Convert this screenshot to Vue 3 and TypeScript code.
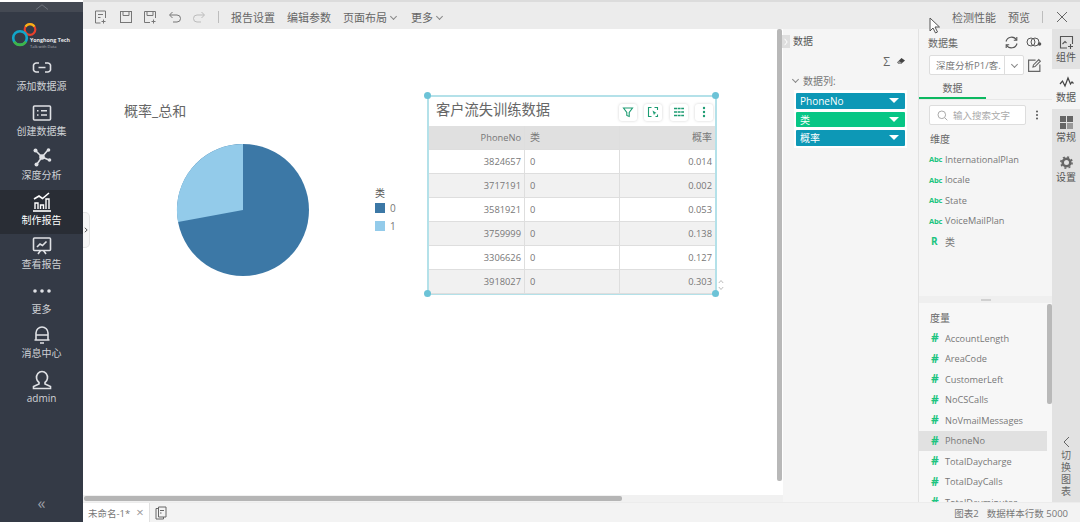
<template>
  <div class="app">
    <!-- Barra lateral -->
    <aside class="sidebar">
      <div class="side-top">
        <svg width="14" height="6" viewBox="0 0 14 6"><path d="M1 5.500 7 .8l6 4.700" fill="none" stroke="#6d727c" stroke-width="1" /></svg>
      </div>
      <div class="logo">
        <svg width="30" height="28" viewBox="0 0 30 28">
          <circle cx="21" cy="8.500" r="5.300" fill="none" stroke="#e8402c" stroke-width="2.200" />
          <path d="M16.500 5.700A5.300 5.300 0 0 1 25.500 5.700" fill="none" stroke="#f6b417" stroke-width="2.200" />
          <circle cx="11" cy="17" r="6.800" fill="none" stroke="#12a5c9" stroke-width="2.600" />
          <path d="M5.200 20.600A6.800 6.800 0 0 0 16.800 20.600" fill="none" stroke="#3fb549" stroke-width="2.600" />
        </svg>
        <div class="logo-text">
          <b>Yonghong Tech</b>
          <span>Talk with Data</span>
        </div>
      </div>
      <div v-for="item in navItems" :key="item.label" class="nav-item" :class="{ active: item.active }">
        <svg class="nav-icon" width="22" height="22" viewBox="0 0 22 22" v-html="item.icon"></svg>
        <span>{{ item.label }}</span>
      </div>
      <div class="side-bottom">«</div>
    </aside>

    <div class="main">
      <!-- Barra de herramientas -->
      <header class="toolbar">
        <div class="tool-icons">
          <svg v-for="(icon, i) in toolIcons" :key="i" width="16" height="16" viewBox="0 0 16 16" v-html="icon"></svg>
        </div>
        <i class="tool-sep"></i>
        <span class="tool-text">报告设置</span>
        <span class="tool-text">编辑参数</span>
        <span class="tool-text">页面布局<em class="caret"></em></span>
        <span class="tool-text">更多<em class="caret"></em></span>
        <div class="tool-right">
          <span>检测性能</span>
          <span>预览</span>
          <i class="tool-sep"></i>
          <svg width="12" height="12" viewBox="0 0 12 12"><path d="M1 1l10 10M11 1 1 11" stroke="#666" stroke-width="1" /></svg>
        </div>
        <svg class="cursor" width="12" height="17" viewBox="0 0 12 17"><path d="M1 1v13l3-3 2.500 5 2-1-2.500-5h4.500z" fill="#fff" stroke="#555" stroke-width="1" /></svg>
      </header>

      <div class="workspace">
        <!-- Lienzo -->
        <div class="canvas-col">
          <div class="canvas-row">
            <section class="canvas">
              <div class="toggle-tab">
                <svg width="4" height="6" viewBox="0 0 4 6"><path d="M.8.8 3.200 3 .8 5.200" fill="none" stroke="#555" stroke-width="1" /></svg>
              </div>

              <div class="pie-title">概率_总和</div>
              <svg class="pie" width="134" height="134" viewBox="-67 -67 134 134">
                <circle r="66" fill="#3c78a6" />
                <path d="M0 0 -65 12A66 66 0 0 1 0 -66z" fill="#93cbea" />
              </svg>
              <div class="legend">
                <div class="legend-title">类</div>
                <div class="legend-row"><i style="background: #3c78a6"></i>0</div>
                <div class="legend-row"><i style="background: #93cbea"></i>1</div>
              </div>

              <div class="widget">
                <i class="handle top-left"></i><i class="handle top-right"></i><i class="handle bottom-left"></i><i class="handle bottom-right"></i>
                <div class="widget-head">
                  <span class="widget-title">客户流失训练数据</span>
                  <div class="widget-tools">
                    <button v-for="(icon, i) in widgetIcons" :key="i" type="button">
                      <svg width="12" height="12" viewBox="0 0 12 12" v-html="icon"></svg>
                    </button>
                  </div>
                </div>
                <div class="table">
                  <div class="tr head">
                    <div class="td num">PhoneNo</div>
                    <div class="td cjk">类</div>
                    <div class="td num cjk">概率</div>
                  </div>
                  <div v-for="row in rows" :key="row[0]" class="tr">
                    <div class="td num">{{ row[0] }}</div>
                    <div class="td">0</div>
                    <div class="td num">{{ row[1] }}</div>
                  </div>
                </div>
                <svg class="spinner" width="6" height="12" viewBox="0 0 6 12"><path d="M.8 4 3 1.500 5.200 4M.8 8 3 10.500 5.200 8" fill="none" stroke="#aaa" stroke-width=".8" /></svg>
              </div>
            </section>
            <div class="v-scroll"></div>
          </div>
          <div class="h-scroll"><div class="h-thumb"></div></div>
        </div>

        <!-- Panel de datos -->
        <section class="data-panel">
          <i class="panel-tab">
            <svg width="4" height="8" viewBox="0 0 4 8"><path d="M.6.8 3.200 4 .6 7.200" fill="none" stroke="#fff" stroke-width="1" /></svg>
          </i>
          <div class="panel-title">数据</div>
          <div class="panel-tools">
            <span class="sigma">Σ</span>
            <svg width="10" height="10" viewBox="0 0 10 10"><path d="M1 6.500 5.500 2 9 4.500 5 8H3z" fill="#444" /><path d="M1 6.500 3 8h2L6 7 3 5z" fill="#999" /></svg>
          </div>
          <div class="columns-label"><em class="caret"></em>数据列:</div>
          <div class="pills">
            <div v-for="pill in pills" :key="pill.label" class="pill" :class="pill.kind">
              <span>{{ pill.label }}</span><i></i>
            </div>
          </div>
        </section>

        <!-- Conjunto de datos -->
        <section class="set-panel">
          <div class="set-top">
            <div class="set-head">
              <span>数据集</span>
              <svg width="15" height="15" viewBox="0 0 15 15"><path d="M2 6.500A5.700 5.700 0 0 1 12.500 5M13 8.500A5.700 5.700 0 0 1 2.500 10" fill="none" stroke="#555" stroke-width="1.100" /><path d="M12.800 2v3.300H9.800M2.200 13v-3.300h3" fill="none" stroke="#555" stroke-width="1.100" /></svg>
              <svg width="16" height="12" viewBox="0 0 16 12"><circle cx="5" cy="6" r="4" fill="none" stroke="#555" /><circle cx="9" cy="6" r="4" fill="none" stroke="#555" /><circle cx="13.500" cy="8" r="1.800" fill="#555" /></svg>
            </div>
            <div class="set-select-row">
              <div class="set-select">
                <span>深度分析P1/客.</span>
                <b><em class="caret"></em></b>
              </div>
              <svg width="15" height="15" viewBox="0 0 14 14"><path d="M8 2H1.500v10.500H12V6" fill="none" stroke="#666" stroke-width="1.100" /><path d="M5.500 8.500 6 6.500 11 1.500l1.500 1.500-5 5z" fill="none" stroke="#666" /></svg>
            </div>
            <div class="tabs"><span class="tab">数据</span></div>
            <div class="search-row">
              <div class="search">
                <svg width="11" height="11" viewBox="0 0 11 11"><circle cx="4.800" cy="4.800" r="3.800" fill="none" stroke="#aaa" /><path d="M7.600 7.600 10.300 10.300" stroke="#aaa" /></svg>
                <span>输入搜索文字</span>
              </div>
              <i class="dots"></i>
            </div>
            <div class="group-name">维度</div>
            <div v-for="d in dimensions" :key="d" class="field">
              <b class="abc">Abc</b><span>{{ d }}</span>
            </div>
            <div class="field">
              <b class="letter-r">R</b><span class="cjk">类</span>
            </div>
          </div>
          <div class="splitter"><i></i></div>
          <div class="set-bottom">
            <div class="measure-scroll"></div>
            <div class="group-name">度量</div>
            <div v-for="m in measures" :key="m" class="field measure" :class="{ picked: m === 'PhoneNo' }">
              <b class="hash">#</b><span>{{ m }}</span>
            </div>
          </div>
        </section>

        <!-- Riel derecho -->
        <nav class="rail">
          <div v-for="r in railItems" :key="r.label" class="rail-item" :class="{ current: r.current }">
            <svg width="15" height="15" viewBox="0 0 15 15" v-html="r.icon"></svg>
            <span>{{ r.label }}</span>
          </div>
          <div class="rail-switch">
            <svg width="7" height="12" viewBox="0 0 7 12"><path d="M6 1 1 6l5 5" fill="none" stroke="#666" stroke-width="1" /></svg>
            <span>切</span><span>换</span><span>图</span><span>表</span>
          </div>
        </nav>
      </div>

      <!-- Barra de estado -->
      <footer class="status">
        <div class="doc-tab">未命名-1*<span class="doc-x">×</span></div>
        <svg class="doc-icon" width="12" height="14" viewBox="0 0 12 14"><path d="M3.500 2.500H1v10.500h7.500V11M3.500 1H11v10H3.500z" fill="none" stroke="#666" /><path d="M5 7h1.500M5 4.500h4" stroke="#666" /></svg>
        <div class="status-right">
          <span>图表2</span>
          <span>数据样本行数 5000</span>
        </div>
      </footer>
    </div>
  </div>
</template>

<script setup lang="ts">
interface NavItem {
  label: string
  icon: string
  active?: boolean
}

const line = 'fill="none" stroke="#dfe1e5" stroke-width="1.600"'

const navItems: NavItem[] = [
  {
    label: '添加数据源',
    icon: `<path d="M8 6H5a3 3 0 0 0-2.500 2v5a3 3 0 0 0 2.500 2h3M14 6h3a3 3 0 0 1 2.500 2v5a3 3 0 0 1-2.500 2h-3M7.500 10.500h7" ${line}/>`,
  },
  {
    label: '创建数据集',
    icon: `<rect x="2.500" y="4" width="17" height="14" rx="1" ${line}/><path d="M6 8.800h1.500M6 13h1.500M10 8.800h6M10 13h6" ${line}/>`,
  },
  {
    label: '深度分析',
    icon: `<path d="M5 5l6 6M17 4l-6 7M11 11l7 3M11 11l-5 7" ${line}/><circle cx="11" cy="11" r="2.800" fill="#dfe1e5"/><circle cx="4.500" cy="4.500" r="2" fill="#dfe1e5"/><circle cx="17.500" cy="4" r="1.800" fill="#dfe1e5"/><circle cx="18.500" cy="14" r="1.800" fill="#dfe1e5"/><circle cx="5.500" cy="18.500" r="2" fill="#dfe1e5"/>`,
  },
  {
    label: '制作报告',
    active: true,
    icon: `<path d="M3 8l5-3 3.500 2.500L18 2" fill="none" stroke="#fff" stroke-width="1.600"/><path d="M2 20h18" stroke="#fff" stroke-width="1.600"/><path d="M4 18v-6h3v6M9.500 18v-4h3v4M15 18V8h3v10" fill="none" stroke="#fff" stroke-width="1.400"/>`,
  },
  {
    label: '查看报告',
    icon: `<rect x="2.500" y="3" width="17" height="12.500" rx="1" ${line}/><path d="M6 12l3-3 2.500 1.500L15.500 6.500M7 19l2.500-3.500M15 19l-2.500-3.500" ${line}/>`,
  },
  {
    label: '更多',
    icon: '<circle cx="4" cy="11" r="1.800" fill="#dfe1e5"/><circle cx="11" cy="11" r="1.800" fill="#dfe1e5"/><circle cx="18" cy="11" r="1.800" fill="#dfe1e5"/>',
  },
  {
    label: '消息中心',
    icon: `<path d="M5 16V9a6 6 0 0 1 12 0v7zM5 11h12M3.500 16h15M9 19h4" ${line}/>`,
  },
  {
    label: 'admin',
    icon: `<path d="M8 13.500a5.500 6 0 1 1 6 0v1.500l5.500 2.500v2h-17v-2L8 15z" ${line}/>`,
  },
]

const stroke = 'fill="none" stroke="#777" stroke-width="1"'

const toolIcons: string[] = [
  `<path d="M7.500 14H2.500V2h10v7M5 5.500h5M5 8.500h2.500M10.500 10.500v4M8.500 12.500h4" ${stroke}/>`,
  `<rect x="2.500" y="2.500" width="11" height="11" ${stroke}/><path d="M5 2.500v4h6v-4" ${stroke}/>`,
  `<path d="M8 13.500H2.500v-11h11V9M5 2.500v4h6v-4M11.500 10.500v4M9.500 12.500h4" ${stroke}/>`,
  `<path d="M3 6h7a3.500 3.500 0 0 1 0 7H6M5.500 3 2.500 6l3 3" ${stroke}/>`,
  '<path d="M13 6H6a3.500 3.500 0 0 0 0 7h4M10.500 3l3 3-3 3" fill="none" stroke="#bbb" stroke-width="1"/>',
]

const green = 'fill="none" stroke="#1c9c72" stroke-width="1.100"'

const widgetIcons: string[] = [
  `<path d="M1.500 2h9L7.200 6.500V10.500l-2.400-1V6.500z" ${green}/>`,
  `<path d="M4.500 1.500h-3v9h3M7.500 1.500h3v2.500M10.500 8.500v2h-2" ${green}/><path d="M5.500 4.500l4 2.500-1.700.5-.8 1.800z" fill="#1c9c72"/>`,
  `<path d="M1 2.500h10M1 6h10M1 9.500h10" stroke="#1c9c72" stroke-width="1.600" stroke-dasharray="3 .6"/>`,
  '<circle cx="6" cy="2" r="1.200" fill="#1c9c72"/><circle cx="6" cy="6" r="1.200" fill="#1c9c72"/><circle cx="6" cy="10" r="1.200" fill="#1c9c72"/>',
]

const rows: [string, string][] = [
  ['3824657', '0.014'],
  ['3717191', '0.002'],
  ['3581921', '0.053'],
  ['3759999', '0.138'],
  ['3306626', '0.127'],
  ['3918027', '0.303'],
]

const pills = [
  { label: 'PhoneNo', kind: 'blue' },
  { label: '类', kind: 'green' },
  { label: '概率', kind: 'blue' },
]

const dimensions = ['InternationalPlan', 'locale', 'State', 'VoiceMailPlan']

const measures = [
  'AccountLength',
  'AreaCode',
  'CustomerLeft',
  'NoCSCalls',
  'NoVmailMessages',
  'PhoneNo',
  'TotalDaycharge',
  'TotalDayCalls',
  'TotalDayminutes',
]

const railItems = [
  {
    label: '组件',
    icon: '<path d="M8 13H1.500V1.500h12V9" fill="none" stroke="#555" stroke-width="1.100"/><path d="M3.500 9 6 6.500 7.500 8M11.500 9v5M9 11.500h5" fill="none" stroke="#555" stroke-width="1.100"/>',
  },
  {
    label: '数据',
    current: true,
    icon: '<path d="M1 9l2.500-3L6 11l3-8 2.500 6 1.500-2 1.500 1.500" fill="none" stroke="#444" stroke-width="1.200"/>',
  },
  {
    label: '常规',
    icon: '<rect x="1" y="1" width="6" height="6" fill="#666"/><rect x="8" y="1" width="6" height="6" fill="#666"/><rect x="1" y="8" width="6" height="6" fill="#666"/><rect x="8" y="8" width="6" height="6" fill="#999"/>',
  },
  {
    label: '设置',
    icon: '<circle cx="7.500" cy="7.500" r="3.800" fill="none" stroke="#666" stroke-width="2.600"/><circle cx="7.500" cy="7.500" r="5.600" fill="none" stroke="#666" stroke-width="1.600" stroke-dasharray="2 2.400"/>',
  },
]
</script>

<style scoped>
.app {
  display: flex;
  width: 1080px;
  height: 522px;
  overflow: hidden;
  font-family: "Open Sans", "Noto Sans CJK SC", sans-serif;
  color: #666;
  background: #fff;
}

em {
  font-style: normal;
}

i {
  display: block;
}

/* Barra lateral */
.sidebar {
  width: 83px;
  flex: none;
  display: flex;
  flex-direction: column;
  margin-top: 2px;
  background: #343a46;
  color: #d0d2d6;
}

.side-top {
  height: 10px;
  flex: none;
  display: flex;
  align-items: center;
  justify-content: center;
  background: #444953;
}

/* El logo ocupa de y=12 a y=56 */
.logo {
  height: 44px;
  flex: none;
  display: flex;
  align-items: flex-start;
  padding: 9px 0 0 9px;
  box-sizing: border-box;
}

.logo-text {
  display: flex;
  flex-direction: column;
  margin: 16px 0 0 -9px;
  white-space: nowrap;
}

.logo-text b {
  font-size: 5.300px;
  line-height: 7px;
  color: #e6e7ea;
}

.logo-text span {
  font-size: 4px;
  line-height: 6px;
  color: #aeb1b7;
}

.nav-item {
  height: 44.500px;
  flex: none;
  display: flex;
  flex-direction: column;
  align-items: center;
  padding-top: 1px;
  box-sizing: border-box;
  font-size: 10px;
  line-height: 14px;
}

.nav-item.active {
  background: #292d35;
  color: #fff;
}

.nav-icon {
  flex: none;
}

.side-bottom {
  margin-top: auto;
  height: 30px;
  text-align: center;
  font-size: 16px;
  line-height: 22px;
  color: #9b9ea5;
}

/* Zona principal */
.main {
  flex: 1;
  min-width: 0;
  display: flex;
  flex-direction: column;
}

.toolbar {
  position: relative;
  height: 29px;
  flex: none;
  display: flex;
  align-items: center;
  box-sizing: border-box;
  padding: 3px 12px 0 10px;
  border-top: 2px solid #dcdcdc;
  background: #ececec;
  font-size: 11px;
  color: #666;
}

.tool-icons {
  display: flex;
  gap: 8.500px;
}

.tool-sep {
  width: 1px;
  height: 12px;
  background: #bdbdbd;
}

.toolbar > .tool-sep {
  margin: 0 12px 0 11px;
}

.tool-text {
  display: flex;
  align-items: center;
  margin-right: 12px;
}

.tool-text:nth-of-type(3) {
  margin-right: 13px;
}

.caret {
  display: inline-block;
  width: 4px;
  height: 4px;
  margin: -2px 2px 0 4px;
  border-right: 1px solid #888;
  border-bottom: 1px solid #888;
  transform: rotate(45deg);
}

.tool-right {
  margin-left: auto;
  display: flex;
  align-items: center;
  gap: 12px;
}

/* Puntero del ratón capturado en la imagen */
.cursor {
  position: absolute;
  left: 846px;
  top: 15px;
  z-index: 5;
}

.tool-right svg:last-child {
  margin-left: 1px;
}

/* Lienzo */
.workspace {
  flex: 1;
  min-height: 0;
  display: flex;
}

.canvas-col {
  width: 700px;
  flex: none;
  display: flex;
  flex-direction: column;
}

.canvas-row {
  flex: 1;
  min-height: 0;
  display: flex;
}

.canvas {
  position: relative;
  flex: 1;
  background: #fff;
}

.v-scroll {
  width: 5px;
  flex: none;
  margin: 0 1px;
  background: #b8b8b8;
  height: 452px;
  border-radius: 2px;
}

.h-scroll {
  height: 7px;
  flex: none;
  display: flex;
  align-items: center;
  padding: 0 1px;
  background: #f1f1f1;
}

.h-thumb {
  width: 538px;
  height: 5px;
  border-radius: 2px;
  background: #b5b5b5;
}

.toggle-tab {
  position: absolute;
  left: 0;
  top: 183px;
  width: 7px;
  height: 36px;
  display: flex;
  align-items: center;
  justify-content: center;
  box-sizing: border-box;
  border: 1px solid #e4e4e4;
  border-left: 0;
  border-radius: 0 5px 5px 0;
  background: #f6f6f6;
}

.pie-title {
  position: absolute;
  left: 41px;
  top: 72px;
  font-size: 14px;
  line-height: 20px;
  color: #666;
}

.pie {
  position: absolute;
  left: 93px;
  top: 114px;
}

.legend {
  position: absolute;
  left: 292px;
  top: 157px;
  font-size: 10px;
  color: #777;
}

.legend-title {
  line-height: 14px;
  margin-bottom: -1px;
  color: #555;
}

.legend-row {
  display: flex;
  align-items: center;
  gap: 5px;
  height: 18px;
}

.legend-row i {
  width: 10px;
  height: 10px;
}

/* Widget de tabla */
.widget {
  position: absolute;
  left: 344px;
  top: 66px;
  width: 290px;
  height: 200px;
  box-sizing: border-box;
  border: 2px solid #b4e1e9;
  background: #fff;
}

.handle {
  position: absolute;
  width: 7px;
  height: 7px;
  border-radius: 50%;
  background: #6cc3d7;
}

.handle.top-left { left: -5px; top: -5px; }
.handle.top-right { right: -4px; top: -5px; }
.handle.bottom-left { left: -5px; bottom: -4px; }
.handle.bottom-right { right: -4px; bottom: -4px; }

.spinner {
  position: absolute;
  right: -9px;
  bottom: 2px;
}

.widget-head {
  height: 29px;
  display: flex;
  align-items: center;
  justify-content: space-between;
  padding: 0 2px 0 7px;
}

.widget-title {
  font-size: 14.250px;
  line-height: 20px;
  margin-top: -4px;
  color: #666;
}

.widget-tools {
  display: flex;
  gap: 7.300px;
  margin-top: 1px;
}

.widget-tools button {
  width: 18px;
  height: 17px;
  padding: 0;
  display: flex;
  align-items: center;
  justify-content: center;
  border: 0;
  border-radius: 3px;
  background: #fff;
  box-shadow: 0 0 3px rgba(0, 0, 0, 0.18);
}

.table {
  width: 286px;
  font-size: 9.300px;
  color: #777;
}

.tr {
  display: grid;
  grid-template-columns: 96px 95px 95px;
  height: 24px;
  box-sizing: border-box;
  border-bottom: 1px solid #dedede;
}

.tr:nth-child(odd) {
  background: #f1f1f1;
}

.tr.head {
  background: #e0e0e0;
}

.td {
  padding: 0 3px 0 5px;
  line-height: 23px;
  border-right: 1px solid #dedede;
}

.td:last-child {
  border-right: 0;
}

.td.num {
  text-align: right;
}

.td.cjk,
.field .cjk {
  font-size: 10px;
}

/* Panel de datos */
.data-panel {
  position: relative;
  width: 135px;
  flex: none;
  background: #f5f5f5;
  border-right: 1px solid #e2e2e2;
}

.panel-tab {
  position: absolute;
  left: -1px;
  top: 6px;
  width: 8px;
  height: 13px;
  display: flex;
  align-items: center;
  justify-content: center;
  background: #dedede;
}

.panel-title {
  padding: 5px 0 0 10px;
  font-size: 10px;
  line-height: 15px;
  color: #555;
}

.panel-tools {
  display: flex;
  align-items: center;
  justify-content: flex-end;
  gap: 6px;
  height: 16px;
  margin-top: 4px;
  padding-right: 12px;
}

.sigma {
  font-size: 12px;
  color: #666;
}

.columns-label {
  display: flex;
  align-items: center;
  height: 14px;
  margin-top: 4px;
  padding-left: 6px;
  font-size: 10px;
  color: #777;
}

.columns-label .caret {
  margin: -2px 5px 0 4px;
}

.pills {
  margin: 3px 11px 0 11px;
  padding: 3px 2px 2px;
  background: #fff;
  display: flex;
  flex-direction: column;
  gap: 3px;
}

.pill {
  height: 15.500px;
  display: flex;
  align-items: center;
  justify-content: space-between;
  padding: 0 4px;
  border-radius: 1px;
  font-size: 10px;
  color: #fff;
}

.pill.blue {
  background: #0d98b6;
}

.pill.green {
  background: #07c685;
}

.pill i {
  width: 0;
  height: 0;
  margin-right: 2px;
  border-left: 5px solid transparent;
  border-right: 5px solid transparent;
  border-top: 5.500px solid #fff;
}

/* Conjunto de datos */
.set-panel {
  width: 133px;
  flex: none;
  display: flex;
  flex-direction: column;
  background: #f5f5f5;
  font-size: 10px;
}

.set-top {
  height: 267px;
  flex: none;
}

.set-head {
  display: flex;
  align-items: center;
  height: 26px;
  padding: 0 10px 0 9px;
  color: #666;
}

.set-head span {
  margin-right: auto;
}

.set-head svg + svg {
  margin-left: 7px;
}

.set-select-row {
  display: flex;
  align-items: center;
  gap: 3px;
  padding-left: 10px;
}

.set-select {
  width: 95px;
  height: 20px;
  display: flex;
  align-items: center;
  box-sizing: border-box;
  border: 1px solid #ddd;
  border-radius: 2px;
  background: #fff;
  padding-left: 6px;
  font-size: 9.500px;
  color: #777;
  white-space: nowrap;
}

.set-select span {
  flex: 1;
  min-width: 0;
}

.set-select b {
  width: 18px;
  height: 100%;
  flex: none;
  display: flex;
  align-items: center;
  justify-content: center;
  border-left: 1px solid #ddd;
}

.set-select .caret {
  margin: -2px 0 0;
}

.tabs {
  height: 24px;
  border-bottom: 1px solid #e8e8e8;
}

.tab {
  display: block;
  width: 67px;
  height: 24px;
  box-sizing: border-box;
  line-height: 26px;
  text-align: center;
  color: #666;
  border-bottom: 2px solid #0cb860;
}

.search-row {
  display: flex;
  align-items: center;
  gap: 10px;
  margin-top: 5px;
  padding-left: 10px;
}

.search {
  width: 97px;
  height: 20px;
  display: flex;
  align-items: center;
  gap: 5px;
  box-sizing: border-box;
  padding-left: 7px;
  border: 1px solid #ddd;
  border-radius: 2px;
  background: #fff;
  font-size: 9.500px;
  color: #aaa;
}

.dots {
  width: 2px;
  height: 2px;
  border-radius: 50%;
  background: #555;
  box-shadow: 0 -3.500px 0 #555, 0 3.500px 0 #555;
}

.group-name {
  height: 20px;
  margin-top: 4px;
  padding-left: 11px;
  line-height: 20px;
  color: #666;
}

.field {
  height: 20.500px;
  display: flex;
  align-items: center;
  padding-left: 10px;
  white-space: nowrap;
  color: #777;
  font-size: 9.200px;
}

.field b {
  width: 16px;
  flex: none;
  color: #1cc47f;
}

.abc {
  font-size: 7.500px;
  letter-spacing: -0.2px;
}

.letter-r {
  font-size: 10px;
  padding-left: 2px;
  box-sizing: border-box;
}

.splitter {
  height: 7px;
  flex: none;
  display: flex;
  align-items: center;
  justify-content: center;
  background: #efefef;
}

.splitter i {
  width: 10px;
  height: 2px;
  background: #d0d0d0;
}

.set-bottom {
  position: relative;
  flex: 1;
  min-height: 0;
  overflow: hidden;
  background: #f7f7f7;
}

.set-bottom .group-name {
  margin-top: 5px;
}

.measure-scroll {
  position: absolute;
  right: 0;
  top: 1px;
  width: 5px;
  height: 100px;
  border-radius: 2px;
  background: #b9b9b9;
}

.measure.picked {
  margin-right: 5px;
  background: #e1e1e1;
}

.hash {
  font-size: 12px;
  line-height: 12px;
  padding-left: 2px;
  box-sizing: border-box;
}

/* Riel derecho */
.rail {
  width: 28px;
  flex: none;
  display: flex;
  flex-direction: column;
  background: #e2e2e2;
  font-size: 10px;
  color: #555;
}

.rail-item {
  height: 40px;
  flex: none;
  display: flex;
  flex-direction: column;
  align-items: center;
  justify-content: center;
  line-height: 14px;
}

.rail-item.current {
  background: #f5f5f5;
}

.rail-switch {
  margin-top: auto;
  padding-bottom: 5px;
  display: flex;
  flex-direction: column;
  align-items: center;
  line-height: 12px;
  font-size: 10px;
  color: #666;
}

.rail-switch svg {
  margin-bottom: 1px;
}

/* Barra de estado */
.status {
  height: 19px;
  flex: none;
  display: flex;
  align-items: center;
  background: #f3f3f3;
  border-top: 1px solid #ececec;
  font-size: 9.500px;
  color: #777;
}

.doc-tab {
  width: 67px;
  height: 100%;
  box-sizing: border-box;
  padding-left: 5px;
  line-height: 19px;
  background: #fff;
  border-right: 1px solid #e0e0e0;
  white-space: nowrap;
}

.doc-x {
  margin-left: 6px;
  font-size: 13px;
  color: #999;
}

.doc-icon {
  margin-left: 5px;
}

.status-right {
  margin-left: auto;
  display: flex;
  gap: 8px;
  padding: 1px 12px 0 0;
}
</style>
